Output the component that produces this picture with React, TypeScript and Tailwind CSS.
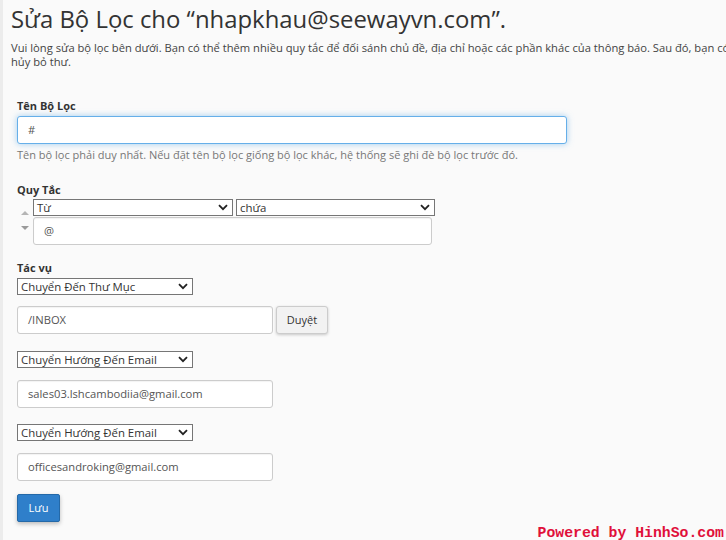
import React from "react";

const font = { fontFamily: '"Open Sans", "Noto Sans", sans-serif' };

const Chevron = () => (
    <svg width="10" height="7" viewBox="0 0 10 7" className="shrink-0">
        <path d="M1 1.2 L5 5.2 L9 1.2" fill="none" stroke="#222" strokeWidth="1.8" />
    </svg>
);

type SelectProps = { value: string; width: string };

const FakeSelect = ({ value, width }: SelectProps) => (
    <div
        className={`${width} h-[17px] flex items-center justify-between bg-white border border-[#767676] pl-[3px] pr-[4px] text-[11.4px] text-[#333] leading-none`}
    >
        <span>{value}</span>
        <Chevron />
    </div>
);

type InputProps = { value: string; width: string; focus?: boolean };

const TextInput = ({ value, width, focus }: InputProps) => (
    <div
        className={`${width} h-[28px] flex items-center bg-white rounded-[3px] pl-[10px] text-[11.2px] text-[#555] border ${
            focus
                ? "border-[#66afe9] shadow-[0_0_6px_rgba(102,175,233,0.6)]"
                : "border-[#ccc] shadow-[inset_0_1px_1px_rgba(0,0,0,0.05)]"
        }`}
    >
        {value}
    </div>
);

const Label = ({ children, className = "" }: { children: React.ReactNode; className?: string }) => (
    <div className={`text-[11px] leading-[15px] font-bold text-[#333] ${className}`}>{children}</div>
);

export default function App() {
    return (
        <div className="relative w-[726px] h-[540px] overflow-hidden bg-[#fafafa]" style={font}>
            <div className="flex h-full">
                <div className="w-[3px] shrink-0 bg-[#ececec]" />
                <div className="pl-[8px] w-[1000px] shrink-0">
                    <h1 className="mt-[4px] text-[23.9px] leading-[30px] text-[#333] whitespace-nowrap">
                        Sửa Bộ Lọc cho “nhapkhau@seewayvn.com”.
                    </h1>
                    <p className="mt-[7px] text-[11.2px] leading-[14px] text-[#444] whitespace-nowrap">
                        Vui lòng sửa bộ lọc bên dưới. Bạn có thể thêm nhiều quy tắc để đối sánh chủ đề, địa chỉ hoặc các
                        phần khác của thông báo. Sau đó, bạn có thể chọn tác vụ thực hiện với thư, chẳng hạn như chuyển
                        hướng hoặc
                        <br />
                        hủy bỏ thư.
                    </p>

                    <div className="pl-[6px]">
                        <Label className="mt-[29px]">Tên Bộ Lọc</Label>
                        <div className="mt-[3px]">
                            <TextInput value="#" width="w-[550px]" focus />
                        </div>
                        <div className="mt-[3px] text-[11px] leading-[15px] text-[#777]">
                            Tên bộ lọc phải duy nhất. Nếu đặt tên bộ lọc giống bộ lọc khác, hệ thống sẽ ghi đè bộ lọc trước đó.
                        </div>

                        <Label className="mt-[20px]">Quy Tắc</Label>
                        <div className="mt-[2px] flex">
                            <div className="w-[16px] flex flex-col items-center gap-[11px] pt-[12px]">
                                <svg width="8" height="4" viewBox="0 0 8 4">
                                    <path d="M0 4 L4 0 L8 4 Z" fill="#b5b5b5" />
                                </svg>
                                <svg width="8" height="4" viewBox="0 0 8 4">
                                    <path d="M0 0 L4 4 L8 0 Z" fill="#9a9a9a" />
                                </svg>
                            </div>
                            <div className="flex flex-col gap-[1px]">
                                <div className="flex gap-[3px]">
                                    <FakeSelect value="Từ" width="w-[200px]" />
                                    <FakeSelect value="chứa" width="w-[199px]" />
                                </div>
                                <TextInput value="@" width="w-[399px]" />
                            </div>
                        </div>

                        <Label className="mt-[15px]">Tác vụ</Label>
                        <div className="mt-[3px]">
                            <FakeSelect value="Chuyển Đến Thư Mục" width="w-[176px]" />
                        </div>
                        <div className="mt-[11px] flex gap-[3px]">
                            <TextInput value="/INBOX" width="w-[256px]" />
                            <button className="w-[52px] h-[28px] rounded-[3px] border border-[#ccc] bg-[#f2f2f2] text-[11px] text-[#333] shadow-[0_1px_3px_rgba(0,0,0,0.2)]">
                                Duyệt
                            </button>
                        </div>

                        <div className="mt-[17px]">
                            <FakeSelect value="Chuyển Hướng Đến Email" width="w-[176px]" />
                        </div>
                        <div className="mt-[12px]">
                            <TextInput value="sales03.lshcambodiia@gmail.com" width="w-[256px]" />
                        </div>

                        <div className="mt-[16px]">
                            <FakeSelect value="Chuyển Hướng Đến Email" width="w-[176px]" />
                        </div>
                        <div className="mt-[12px]">
                            <TextInput value="officesandroking@gmail.com" width="w-[256px]" />
                        </div>

                        <button className="mt-[13px] w-[43px] h-[28px] rounded-[2px] border border-[#2469a8] bg-[#2f7fca] text-[11px] text-white shadow-[0_2px_4px_rgba(0,0,0,0.25)]">
                            Lưu
                        </button>
                    </div>
                </div>
            </div>

            <div
                className="absolute right-[2px] bottom-0 text-[14.8px] leading-[14px] font-bold text-[#e0103a] whitespace-nowrap"
                style={{ fontFamily: '"Liberation Mono", "DejaVu Sans Mono", monospace' }}
            >
                Powered by HinhSo.com
            </div>
        </div>
    );
}
